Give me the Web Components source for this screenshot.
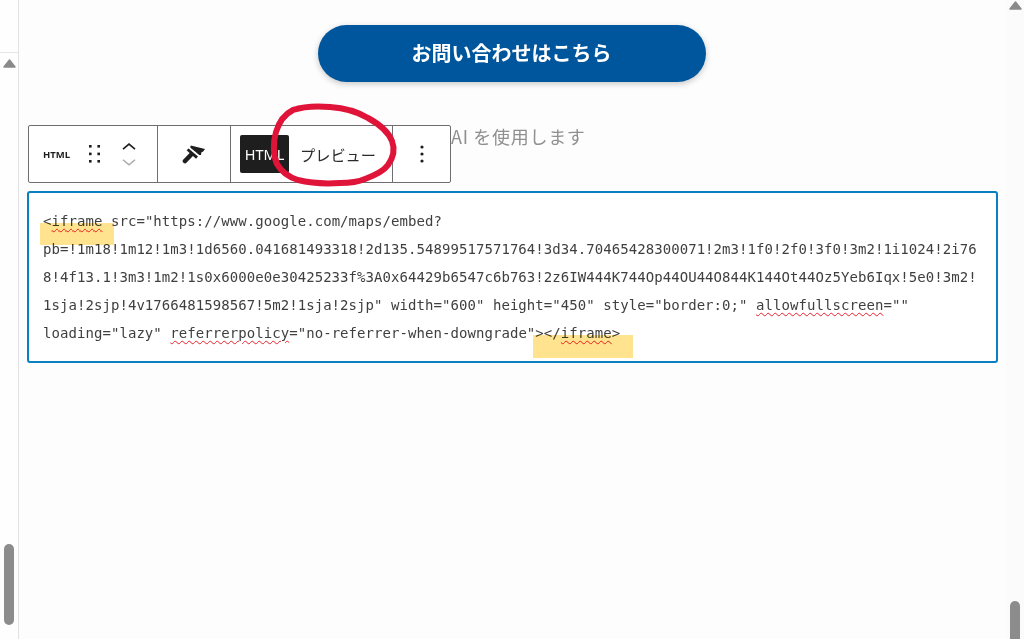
<!DOCTYPE html>
<html lang="ja">
<head>
<meta charset="utf-8">
<title>HTML block</title>
<style>
  html, body { margin: 0; height: 100%; overflow: hidden; background: #fdfdfd; }
  body { font-family: "Noto Sans", "Noto Sans CJK JP", sans-serif; }
</style>
</head>
<body>
<editor-shell>
  <cta-button>お問い合わせはこちら</cta-button>
  <block-toolbar>AI を使用します</block-toolbar>
  <code-box>
    <code-line>&lt;<spell-error>iframe</spell-error> src="https://www.google.com/maps/embed?</code-line>
    <code-line>pb=!1m18!1m12!1m3!1d6560.041681493318!2d135.54899517571764!3d34.70465428300071!2m3!1f0!2f0!3f0!3m2!1i1024!2i76</code-line>
    <code-line>8!4f13.1!3m3!1m2!1s0x6000e0e30425233f%3A0x64429b6547c6b763!2z6IW444K744Op44OU44O844K144Ot44Oz5Yeb6Iqx!5e0!3m2!</code-line>
    <code-line>1sja!2sjp!4v1766481598567!5m2!1sja!2sjp" width="600" height="450" style="border:0;" <spell-error>allowfullscreen</spell-error>=""</code-line>
    <code-line>loading="lazy" <spell-error>referrerpolicy</spell-error>="no-referrer-when-downgrade"&gt;&lt;/<spell-error>iframe</spell-error>&gt;</code-line>
  </code-box>
</editor-shell>

<script>
class EditorShell extends HTMLElement {
  constructor() {
    super();
    this.attachShadow({ mode: 'open' });
    this.shadowRoot.innerHTML = `
      <style>
        :host {
          display: flex;
          width: 1024px;
          height: 639px;
          position: relative;
          overflow: hidden;
        }
        .side {
          width: 19px;
          flex: none;
          box-sizing: border-box;
          border-right: 1px solid #e2e2e2;
          background: #fefefe;
          display: flex;
          flex-direction: column;
          align-items: center;
        }
        .side .rule {
          height: 1px;
          background: #e6e6e6;
          margin-top: 52px;
          align-self: stretch;
        }
        .arrow { display: block; }
        .side .arrow { margin-top: 6px; }
        .thumb {
          width: 10px;
          background: #8c8c8c;
          border-radius: 5px;
        }
        .side .thumb { height: 81px; margin-top: auto; margin-bottom: 14px; }
        main {
          flex: none;
          width: 987px;
          display: flex;
          flex-direction: column;
          box-sizing: border-box;
          padding: 25px 0 0 8px;
        }
        .right {
          flex: none;
          width: 18px;
          background: #fbfbfb;
          display: flex;
          flex-direction: column;
          align-items: center;
        }
        .right .arrow { margin-top: 1px; }
        .right .thumb { height: 38px; margin-top: auto; border-radius: 5px 5px 0 0; }
        .ink {
          position: absolute;
          left: 0;
          top: 0;
          pointer-events: none;
        }
      </style>
      <div class="side">
        <div class="rule"></div>
        <svg class="arrow" width="13" height="9" viewBox="0 0 13 9" fill="#8a8a8a" stroke="#8a8a8a" stroke-width="1.5" stroke-linejoin="round"><path d="M6.5 1 L12 8 L1 8 Z"/></svg>
        <div class="thumb"></div>
      </div>
      <main><slot></slot></main>
      <div class="right">
        <svg class="arrow" width="13" height="9" viewBox="0 0 13 9" fill="#8a8a8a" stroke="#8a8a8a" stroke-width="1.5" stroke-linejoin="round"><path d="M6.5 1 L12 8 L1 8 Z"/></svg>
        <div class="thumb"></div>
      </div>
      <!-- hand drawn circle round the preview tab -->
      <svg class="ink" width="1024" height="639" viewBox="0 0 1024 639" fill="none">
        <path d="M293 110 C305 106 318 106 330 107 C345 108 358 112 368 118 C379 124 388 131 392 141 C395 149 393 158 388 165 C383 172 373 176 365 179 C358 182 350 183 340 183 C325 184 310 183 298 180 C288 177 281 171 277 164 C273 155 273 142 276 132 C279 122 285 114 293 110" stroke="#df1438" stroke-width="6" stroke-linecap="round" stroke-linejoin="round"/>
      </svg>
    `;
  }
}

class CtaButton extends HTMLElement {
  constructor() {
    super();
    this.attachShadow({ mode: 'open' });
    this.shadowRoot.innerHTML = `
      <style>
        :host {
          display: flex;
          align-self: center;
          align-items: center;
          justify-content: center;
          box-sizing: border-box;
          width: 388px;
          height: 57px;
          padding-bottom: 2px;
          margin-left: -10px;
          background: #00569c;
          color: #fff;
          border-radius: 29px;
          font: 700 20px/1 "Noto Sans CJK JP", "Noto Sans", sans-serif;
          box-shadow: 0 2px 6px rgba(0,0,0,0.22);
        }
      </style>
      <slot></slot>
    `;
  }
}

class BlockToolbar extends HTMLElement {
  constructor() {
    super();
    this.attachShadow({ mode: 'open' });
    this.shadowRoot.innerHTML = `
      <style>
        :host {
          display: flex;
          align-items: flex-start;
          margin-top: 43px;
          margin-left: 1px;
        }
        .bar {
          display: flex;
          height: 58px;
          box-sizing: border-box;
          border: 1px solid #6f6f6f;
          border-radius: 2px;
          background: #fff;
          color: #1e1e1e;
          flex: none;
        }
        .group {
          display: flex;
          align-items: center;
          border-right: 1px solid #6f6f6f;
          box-sizing: border-box;
        }
        .group:last-child { border-right: 0; }
        .block { width: 129px; padding-left: 14px; }
        .label {
          font: 700 9.5px "Noto Sans", sans-serif;
          width: 46px;
        }
        .drag { width: 11px; height: 20px; }
        .mover { display: flex; flex-direction: column; gap: 9px; margin-left: 22px; }
        .mover svg { display: block; }
        .style { width: 73px; justify-content: center; }
        .modes { width: 162px; padding-left: 9px; }
        .mode-html {
          width: 49px;
          height: 38px;
          background: #1e1e1e;
          color: #fff;
          border-radius: 2px;
          display: flex;
          align-items: center;
          justify-content: center;
          font: 400 14.5px "Noto Sans", sans-serif;
        }
        .mode-preview {
          margin-left: 11px;
          font: 400 15.2px "Noto Sans CJK JP", sans-serif;
          color: #2b2b2b;
        }
        .more { width: 57px; justify-content: center; }
        .note {
          color: #8f8f8f;
          font: 400 18px "Noto Sans CJK JP", "Noto Sans", sans-serif;
          letter-spacing: .7px;
          line-height: 22px;
        }
      </style>
      <div class="bar">
        <div class="group block">
          <span class="label">HTML</span>
          <svg class="drag" viewBox="0 0 11 20" fill="#1e1e1e">
            <rect x="0" y="1" width="2.6" height="2.6"/><rect x="8.4" y="1" width="2.6" height="2.6"/>
            <rect x="0" y="8.6" width="2.6" height="2.6"/><rect x="8.4" y="8.6" width="2.6" height="2.6"/>
            <rect x="0" y="16" width="2.6" height="2.6"/><rect x="8.4" y="16" width="2.6" height="2.6"/>
          </svg>
          <div class="mover">
            <svg width="14" height="7" viewBox="0 0 14 7" fill="none" stroke="#1e1e1e" stroke-width="1.7"><path d="M1 6.2 L7 1.2 L13 6.2"/></svg>
            <svg width="14" height="7" viewBox="0 0 14 7" fill="none" stroke="#a8a8a8" stroke-width="1.4"><path d="M1 .8 L7 5.8 L13 .8"/></svg>
          </div>
        </div>
        <div class="group style">
          <svg width="24" height="24" viewBox="0 0 24 24" fill="#1e1e1e">
            <path d="M8.8 3.6 L23 7 L21 9.7 L19.6 10 L18.9 13 L17.2 13 L8.2 5.4 Z"/>
            <path d="M4.6 8.3 L6.6 6.4 L16 14.6 L14 16.8 Z"/>
            <path d="M8.8 13 L3 19" fill="none" stroke="#1e1e1e" stroke-width="4.6" stroke-linecap="round"/>
          </svg>
        </div>
        <div class="group modes">
          <span class="mode-html">HTML</span>
          <span class="mode-preview">プレビュー</span>
        </div>
        <div class="group more">
          <svg width="4" height="18" viewBox="0 0 4 18" fill="#1e1e1e">
            <circle cx="2" cy="2" r="1.6"/><circle cx="2" cy="9" r="1.6"/><circle cx="2" cy="16" r="1.6"/>
          </svg>
        </div>
      </div>
      <span class="note"><slot></slot></span>
    `;
  }
}

class CodeBox extends HTMLElement {
  constructor() {
    super();
    this.attachShadow({ mode: 'open' });
    this.shadowRoot.innerHTML = `
      <style>
        :host {
          display: block;
          position: relative;
          box-sizing: border-box;
          width: 971px;
          height: 172px;
          margin-top: 8px;
          padding: 14px 14px;
          background: #fff;
          border: 2px solid #0a7fc1;
          border-radius: 3px;
          color: #3f3f3f;
          font: 14px/28px "DejaVu Sans Mono", "Liberation Mono", monospace;
          letter-spacing: .06px;
        }
        /* marker strokes sit over the text */
        .marker {
          position: absolute;
          background: #ffe38f;
          mix-blend-mode: multiply;
          pointer-events: none;
        }
        .m1 { left: 11px; top: 30px; width: 74px; height: 22px; }
        .m2 { left: 504px; top: 142px; width: 100px; height: 23px; }
      </style>
      <slot></slot>
      <div class="marker m1"></div>
      <div class="marker m2"></div>
    `;
  }
}

// no whitespace around the slot here: these sit inside a line of text
class CodeLine extends HTMLElement {
  constructor() {
    super();
    this.attachShadow({ mode: 'open' });
    this.shadowRoot.innerHTML = '<style>:host { display: block; white-space: nowrap; height: 28px; }</style><slot></slot>';
  }
}

class SpellError extends HTMLElement {
  constructor() {
    super();
    this.attachShadow({ mode: 'open' });
    this.shadowRoot.innerHTML = '<style>:host { display: inline; text-decoration: underline wavy #e8202a 1px; text-underline-offset: 2px; }</style><slot></slot>';
  }
}

customElements.define('editor-shell', EditorShell);
customElements.define('cta-button', CtaButton);
customElements.define('block-toolbar', BlockToolbar);
customElements.define('code-box', CodeBox);
customElements.define('code-line', CodeLine);
customElements.define('spell-error', SpellError);
</script>
</body>
</html>
